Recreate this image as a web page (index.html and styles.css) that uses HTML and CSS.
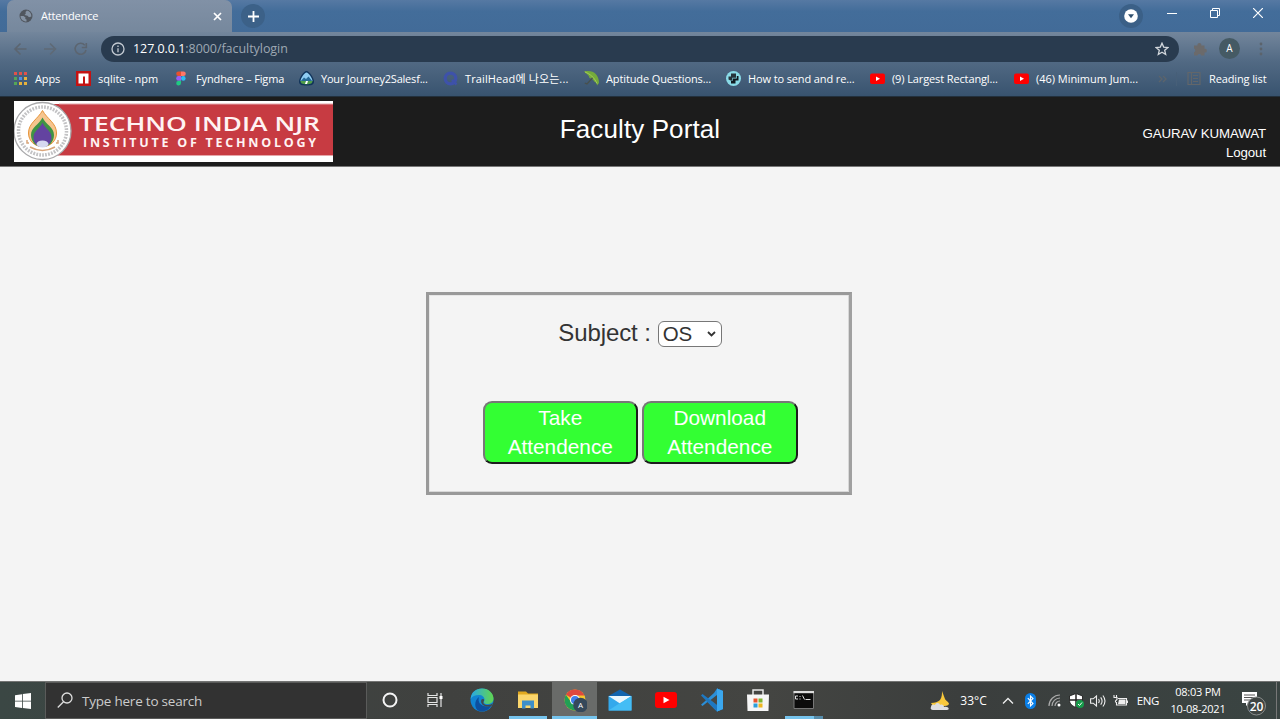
FILE: index.html
```html
<!DOCTYPE html>
<html lang="en">
<head>
<meta charset="utf-8">
<title>Attendence</title>
<link rel="stylesheet" href="styles.css">
</head>
<body>
<div class="screen">
  <div class="tabstrip">
    <div class="tab">
      <svg class="globe" width="14" height="14" viewBox="0 0 14 14"><circle cx="7" cy="7" r="6.500" fill="#50565e"/><path d="M1.500 7h3l2 1.500-.3 1.500 1.300.5v2C4 12.500 1.500 10 1.500 7zM8 1.500L6.500 3l.3 1.500L5.500 6l3 .8 1.500 1.500 2.400-.8C12.500 4 10.500 2 8 1.500z" fill="#8492a3"/></svg>
      <span class="tab-title">Attendence</span>
      <svg width="9" height="9" viewBox="0 0 9 9"><path d="M1 1l7 7M8 1L1 8" stroke="#fff" stroke-width="1.700"/></svg>
    </div>
    <div class="newtab"><svg width="11" height="11" viewBox="0 0 11 11"><path d="M5.500 0v11M0 5.500h11" stroke="#fff" stroke-width="1.800"/></svg></div>
    <div class="winctl">
      <div class="round"><svg width="14" height="14" viewBox="0 0 14 14"><circle cx="7" cy="7" r="6.800" fill="#fff"/><path d="M4 5.200h6L7 9.200z" fill="#30506f"/></svg></div>
      <svg class="min" width="10" height="10" viewBox="0 0 10 10"><path d="M0 5.500h10" stroke="#fff"/></svg>
      <svg class="max" width="10" height="10" viewBox="0 0 10 10"><path d="M.5 2.500h7v7h-7zM2.500 2.500v-2h7v7h-2" fill="none" stroke="#fff"/></svg>
      <svg class="cls" width="10" height="10" viewBox="0 0 10 10"><path d="M0 0l10 10M10 0L0 10" stroke="#fff" stroke-width="1.200"/></svg>
    </div>
  </div>
  <div class="chrome">
    <div class="toolbar">
      <svg class="nav" width="76" height="16" viewBox="0 0 76 16" fill="none" stroke-width="1.600"><path stroke="#5c6570" d="M13.500 8H2M7.500 2.500L2 8l5.500 5.500"/><path stroke="#5f6a76" d="M31 8h11.500M37 2.500L42.500 8 37 13.500"/><path stroke="#5c6570" d="M71.800 4.200A5.500 5.500 0 1 0 73 9M73.300 2v4.500h-4.500"/></svg>
      <div class="omnibox">
        <svg width="14" height="14" viewBox="0 0 14 14" fill="none" stroke="#c3cad2" stroke-width="1.300"><circle cx="7" cy="7" r="6"/><path d="M7 6.200v4M7 3.500v1.500"/></svg>
        <span class="url"><b>127.0.0.1</b>:8000/facultylogin</span>
        <svg class="star" width="14" height="14" viewBox="0 0 14 14"><path d="M7 1.200l1.700 3.900 4.200.4-3.200 2.800 1 4.200L7 10.300l-3.700 2.200 1-4.200L1.100 5.500l4.200-.4z" fill="none" stroke="#d3d8dd" stroke-width="1.300"/></svg>
      </div>
      <svg class="puzzle" width="14" height="14" viewBox="0 0 14 14"><path d="M1 3.500h3.500a2 2 0 1 1 3.800 0h3.200v3.300a1.900 1.900 0 1 1 0 3.700v3H8.200a1.900 1.900 0 0 0-3.700 0H1v-3.300a1.900 1.900 0 0 0 0-3.600z" fill="#6b6a6b"/></svg>
      <div class="avatar">A</div>
      <svg class="dots" width="4" height="14" viewBox="0 0 4 14" fill="#5b636c"><circle cx="2" cy="2" r="1.400"/><circle cx="2" cy="7" r="1.400"/><circle cx="2" cy="12" r="1.400"/></svg>
    </div>
    <div class="bookmarks">
      <div class="bm"><svg width="15" height="15" viewBox="0 0 15 15"><path d="M1 1h3v3H1zM6 1h3v3H6zM11 1h3v3h-3z" fill="#e0524a"/><path d="M1 6h3v3H1z" fill="#54a657"/><path d="M6 6h3v3H6z" fill="#4f8fe8"/><path d="M11 6h3v3h-3zM6 11h3v3H6zM11 11h3v3h-3z" fill="#e6b13c"/><path d="M1 11h3v3H1z" fill="#54a657"/></svg><span>Apps</span></div>
      <div class="bm npm"><svg width="15" height="15" viewBox="0 0 15 15"><path fill="#c41212" d="M0 0h15v15H0z"/><path fill="#fff" d="M2.500 2.500h10v10H9V5.500H7v7H2.500z"/></svg><span>sqlite - npm</span></div>
      <div class="bm"><svg width="15" height="15" viewBox="0 0 15 15"><path d="M7 .5H4.500a2.300 2.300 0 0 0 0 4.600H7z" fill="#e8502e"/><path d="M7 .5h2.500a2.300 2.300 0 0 1 0 4.600H7z" fill="#ff7667"/><path d="M7 5.100H4.500a2.300 2.300 0 0 0 0 4.600H7z" fill="#9a5cf5"/><circle cx="9.300" cy="7.400" r="2.300" fill="#2bbcf5"/><path d="M7 9.700H4.500A2.400 2.400 0 1 0 7 12z" fill="#1fc982"/></svg><span>Fyndhere – Figma</span></div>
      <div class="bm journey"><svg width="15" height="15" viewBox="0 0 15 15"><path d="M7.500 0C10.500 0 15 7 15 10.500s-2.500 4-7.500 4-7.500-.5-7.500-4S4.500 0 7.500 0z" fill="#10345b"/><path d="M7.500 1.500C9.500 1.500 13.500 7.500 13.500 10h-12C1.500 7.500 5.500 1.500 7.500 1.500z" fill="#8fcdf2"/><path d="M1.800 10L5 6.500l2 1.500L9.500 5.500 13.200 10z" fill="#276b99"/><path d="M1.500 10h12c0 2-1.500 3.300-6 3.300s-6-1.300-6-3.300z" fill="#4f9c4a"/><path d="M7 10h2l-1 3H6z" fill="#fff"/></svg><span>Your Journey2Salesf...</span></div>
      <div class="bm head"><svg width="15" height="15" viewBox="0 0 15 15"><circle cx="7.500" cy="7.500" r="5.300" fill="none" stroke="#3e52aa" stroke-width="3.200"/><path d="M9 9l4.500 4.500" stroke="#3e52aa" stroke-width="2.500"/></svg><span>TrailHead에 나오는...</span></div>
      <div class="bm"><svg width="15" height="15" viewBox="0 0 15 15"><path d="M0 .5c9-2 15 3 15 11.500L13 14.500c0-2-.8-3-2.800-4C9.500 8.500 7.500 7.500 5.500 7 5 4 2.500 3 0 .5z" fill="#74ab3b"/><path d="M1 1c5 2 9 5 12 11.500" stroke="#a5cc58" fill="none"/><path d="M8.500 7L3 13l-2.200-1" stroke="#48504c" stroke-width="1.300" fill="none"/></svg><span>Aptitude Questions...</span></div>
      <div class="bm"><svg width="15" height="15" viewBox="0 0 15 15"><circle cx="7.500" cy="7.500" r="7.500" fill="#8adbe8"/><path d="M5 2.500h5v4.300H6.200v2.700H4.500L2.500 8.500V5.500H5z" fill="#26343b"/><path d="M10.800 5h1.700v4.500H9.500v3H5V9.800h1.800V7.500h4z" fill="#101a20"/></svg><span>How to send and re...</span></div>
      <div class="bm"><svg width="15" height="15" viewBox="0 0 15 15"><rect y="2.500" width="15" height="10.500" rx="2" fill="#f00"/><path d="M6 5.500v4.500l4-2.200z" fill="#fff"/></svg><span>(9) Largest Rectangl...</span></div>
      <div class="bm jump"><svg width="15" height="15" viewBox="0 0 15 15"><rect y="2.500" width="15" height="10.500" rx="2" fill="#f00"/><path d="M6 5.500v4.500l4-2.200z" fill="#fff"/></svg><span>(46) Minimum Jum...</span></div>
      <div class="bm more"><svg width="9" height="8" viewBox="0 0 9 8"><path d="M1 1l3 3-3 3M5 1l3 3-3 3" fill="none" stroke="#5c646b" stroke-width="1.300"/></svg></div>
      <div class="bm"><svg width="15" height="15" viewBox="0 0 15 15" fill="none" stroke="#62666a" stroke-width="1.200"><path d="M1 1.500h12v12H1zM4.500 2v11M6 4.500h5M6 7.500h5M6 10.500h5"/></svg><span>Reading list</span></div>
    </div>
  </div>

  <header class="header">
    <svg class="logo" width="319" height="61" viewBox="0 0 319 61">
      <path fill="#fff" d="M0 0h319v61H0z"/>
      <path fill="#c73b42" d="M29 3h290v51.500H29z"/>
      <path stroke="#e6a6a9" d="M45 3h274M45 54.500h274"/>
      <circle cx="28.500" cy="30" r="28.500" fill="#fff" stroke="#a8a8aa" stroke-width="1.300"/>
      <circle cx="28.500" cy="30" r="24" fill="none" stroke="#c2c2c4" stroke-width="3.500" stroke-dasharray="1.800 1.200"/>
      <path d="M15 42h-2v-3M42 42h2v-3M16 46q12.500 7 25 0" fill="none" stroke="#d9a57a" stroke-width="1.500"/>
      <path d="M28.500 9.500C24 18 14.500 22 14.500 32c0 8 6 13.500 14 13.500s14-5.500 14-13.500c0-10-9.500-14-14-22.500z" fill="#f6c58f" stroke="#e79438"/>
      <path d="M28.500 16.500C25 24 17 26 17 34c0 7 5 12 11.500 12S40 41 40 34c0-8-8-10-11.500-17.500z" fill="#3f9444"/>
      <path d="M28.500 21.500C26 28 19.500 29.500 19.500 36.500c0 5.500 3.800 9.500 9 9.500s9-4 9-9.500c0-7-6.500-8.500-9-15z" fill="#6343a0"/>
      <ellipse cx="28.500" cy="43" rx="6" ry="3.500" fill="#d6d8ef"/>
      <text class="logo-a" x="65" y="29.500" textLength="241" lengthAdjust="spacingAndGlyphs">TECHNO INDIA NJR</text>
      <text class="logo-b" x="69" y="46" textLength="233" lengthAdjust="spacing">INSTITUTE OF TECHNOLOGY</text>
    </svg>
    <h1 class="title">Faculty Portal</h1>
    <div class="user"><span class="name">GAURAV KUMAWAT</span><span class="logout">Logout</span></div>
  </header>

  <main class="main">
    <div class="panel">
      <div class="subject"><span>Subject :</span>
        <div class="select"><span>OS</span><svg width="9" height="6" viewBox="0 0 9 6"><path d="M1 1l3.500 3.500L8 1" fill="none" stroke="#333" stroke-width="1.800"/></svg></div>
      </div>
      <div class="actions"><button class="btn">Take<br>Attendence</button><button class="btn">Download<br>Attendence</button></div>
    </div>
  </main>

  <footer class="taskbar">
    <div class="start"><svg width="16" height="16" viewBox="0 0 16 16" fill="#fff"><path d="M0 2.200l7-1v6.500H0zM7.800 1L16 0v7.700H7.800zM0 8.400h7v6.500l-7-1zM7.800 8.400H16V16l-8.200-1z"/></svg></div>
    <div class="search"><svg width="16" height="17" viewBox="0 0 16 17" fill="none" stroke="#dedede" stroke-width="1.300"><circle cx="10" cy="6" r="5"/><path d="M6.500 9.700L.8 15.500"/></svg><span>Type here to search</span></div>
    <div class="apps">
      <div class="app"><svg width="24" height="24" viewBox="0 0 24 24"><circle cx="12" cy="12" r="6.500" fill="none" stroke="#f4f4f4" stroke-width="2"/></svg></div>
      <div class="app"><svg width="24" height="24" viewBox="0 0 24 24" fill="none" stroke="#e5e5e5" stroke-width="1.200"><path d="M4 5v2.500h9V5M4 19v-2.500h9V19M4 9.500h9v5H4zM17 5v14"/><path d="M15.500 8h3v3h-3z" fill="#fff" stroke="none"/></svg></div>
      <div class="app"><svg width="24" height="24" viewBox="0 0 24 24">
        <defs><linearGradient id="eg" x1="0" x2="1"><stop offset="0" stop-color="#28a8e6"/><stop offset="1" stop-color="#62d64e"/></linearGradient></defs>
        <circle cx="12" cy="12" r="11.500" fill="#1184d2"/><path d="M.7 11C1 4 6 .5 12 .5c7 0 11.500 5 11.500 10 0 4-3 5.500-6 5.500-4 0-4-2-3-3.500C15 9 12 7 9 7c-4 0-7 1.500-8.300 4z" fill="url(#eg)"/><path d="M9 9c-2 6 3 11 12 9-3 5-8 6-12 5-5-2-5-11 0-14z" fill="#0d4f9e"/><path d="M14 12.500c-1.500 3 0 4.500 4 4.500 2 0 4-1 5-2l-1.500 3C15 20 9.500 16 11.500 11.500c1-1 3-.5 2.500 1z" fill="#42484a"/></svg></div>
      <div class="app run"><svg width="24" height="24" viewBox="0 0 24 24"><path d="M2 3.500h8l2 2h10V20H2z" fill="#e2a91f"/><path d="M2 6.500h20V20H2z" fill="#fbd66c"/><path d="M6 20.500v-8h12v8h-3.500v-3h-5v3z" fill="#3d8fc9"/></svg></div>
      <div class="app run active"><svg width="24" height="24" viewBox="0 0 24 24"><circle cx="12" cy="12" r="10.500" fill="#f5c52c"/><path d="M12 12L2.900 6.800A10.500 10.500 0 0 1 21.500 7.500H12z" fill="#df493d"/><path d="M2.900 6.800A10.500 10.500 0 0 0 12 22.500l4-7.500-8-1z" fill="#21a055"/><circle cx="12" cy="12" r="5" fill="#fff"/><circle cx="12" cy="12" r="4" fill="#407fea"/><circle cx="17.500" cy="17" r="7.300" fill="#35485a"/><text x="17.500" y="20" class="badge-a">A</text></svg></div>
      <div class="app"><svg width="24" height="24" viewBox="0 0 24 24"><path d="M.5 8L12 1.500 23.500 8z" fill="#1264ae"/><path d="M.5 8h23v14.500H.5z" fill="#33a9ec"/><path d="M.5 8h23L12 15.500z" fill="#eaf6fd"/><path d="M.5 22.500L12 15l11.500-7v14.500z" fill="#44bdf5"/></svg></div>
      <div class="app"><svg width="24" height="24" viewBox="0 0 24 24"><rect x="1" y="4" width="22" height="16" rx="3" fill="#f00"/><path d="M9.500 8.800v6.500l6-3.200z" fill="#fff"/></svg></div>
      <div class="app"><svg width="24" height="24" viewBox="0 0 24 24"><path d="M17 .5l6 2.500v18l-6 2.500L7.500 14 2.500 18 1 16.800 14 5z" fill="#2b8fd8"/><path d="M1 7.500L2.500 6 17 17V.5l6 2.500v18l-6 2.500z" fill="#1e78c2"/><path d="M17 .5l6 2.500v18l-6 2.500z" fill="#3ba7ee"/><path d="M17 7v10l-6.500-5z" fill="#454744"/></svg></div>
      <div class="app"><svg width="24" height="24" viewBox="0 0 24 24"><path d="M7 7V2h10v5" fill="none" stroke="#e8e8e8" stroke-width="1.500"/><path d="M1 6.500h22L22.500 23h-21z" fill="#f6f6f6"/><path d="M7.500 10.500h4v4h-4z" fill="#e8532c"/><path d="M12.500 10.500h4v4h-4z" fill="#7fb52f"/><path d="M7.500 15.500h4v4h-4z" fill="#2b9fda"/><path d="M12.500 15.500h4v4h-4z" fill="#efb71f"/></svg></div>
      <div class="app run cmd"><svg width="24" height="24" viewBox="0 0 24 24"><path d="M2 3.500h19.500v17H2z" fill="#0c0c0c" stroke="#777"/><path d="M1.500 3h20.500v2.200H1.500z" fill="#ddd"/><path d="M6 8H3.500v3H6M8 8v1M8 10.500v1M10.500 7.500l2 4M13.500 11.500h5" stroke="#ddd" fill="none"/></svg></div>
    </div>
    <div class="tray">
      <svg class="moon" width="21" height="21" viewBox="0 0 21 21"><path d="M12 1c1 3 2 5 3 8 1 2 4 3 4 5-1 2-4 2-6 2H3l-2-3c4 0 7-1 9-3 2-3 2-6 2-9z" fill="#f8c83c"/><path d="M1 17c0-3 3-3 4-2 1-3 5-2 5 0 2-1 4 0 4 2 5-1 6 3 3 3H3c-2 0-3-2-2-3z" fill="#dedfe1"/></svg>
      <span class="temp">33°C</span>
      <svg class="chev" width="12" height="8" viewBox="0 0 12 8"><path d="M1 6.500L6 1.500l5 5" fill="none" stroke="#eee" stroke-width="1.300"/></svg>
      <svg class="bt" width="11" height="16" viewBox="0 0 11 16"><rect width="11" height="16" rx="5.500" fill="#0a7fe8"/><path d="M2.800 5.200l5.200 5.300L5.500 13V3L8 5.500l-5.200 5.300" fill="none" stroke="#fff" stroke-width="1.100"/></svg>
      <svg class="wifi" width="13" height="13" viewBox="0 0 13 13" fill="none" stroke="#aaa" stroke-width="1.200"><path d="M1 12A11 11 0 0 1 12 1M4 12a8 8 0 0 1 8-8M7 12a5 5 0 0 1 5-5"/><circle cx="11" cy="11" r="1.500" fill="#fff" stroke="none"/></svg>
      <svg class="shield" width="15" height="15" viewBox="0 0 15 15"><path d="M7 .5L13.500 3v4c0 4-3 6-6.500 7.500C3.500 13 .5 11 .5 7V3z" fill="#fff" stroke="#111" stroke-width=".8"/><path d="M7 1v13M1 7h12.500" stroke="#222" stroke-width="1.500"/><circle cx="11" cy="11" r="4" fill="#169b4a"/><path d="M9 11l1.500 1.500L13 9.500" stroke="#fff" fill="none"/></svg>
      <svg class="vol" width="16" height="14" viewBox="0 0 16 14" fill="none" stroke="#eee" stroke-width="1.100"><path d="M.6 4.800h2.600L6.500 2v10L3.200 9.200H.6zM8.500 5q1.500 2 0 4M10.700 3.300q2.800 3.700 0 7.400M12.900 1.500q4.200 5.500 0 11"/></svg>
      <svg class="bat" width="15" height="12" viewBox="0 0 15 12" fill="none" stroke="#eee" stroke-width="1.100"><path d="M5 3.500h8.500v6.500H3.500V7M14.500 5.500v2.500M1 0v2.500M3.500 0v2.500M.5 2.500h3.500v2L2.500 6v1.500"/><path d="M6 4.500h6.500v4.500H5z" fill="#eee" stroke="none"/></svg>
      <span class="lang">ENG</span>
      <div class="clock"><span class="time">08:03 PM</span><span class="date">10-08-2021</span></div>
      <div class="notif"><svg width="26" height="25" viewBox="0 0 26 25"><path d="M1 1h15v11H8l-3 3v-3H1z" fill="#fff"/><path d="M3 4h11M3 6.500h11M3 9h7" stroke="#555"/><circle cx="15.500" cy="15" r="9" fill="#3f4543" stroke="#8a8e8d"/><text x="15.500" y="19.500" class="count">20</text></svg></div>
      <i class="peek"></i>
    </div>
  </footer>
</div>
</body>
</html>
```
FILE: styles.css
```css
* { box-sizing: border-box; }
body { margin: 0; }
svg { display: block; flex: none; }
span { white-space: nowrap; }
.screen { width: 1280px; height: 719px; display: flex; flex-direction: column; overflow: hidden; background: #f4f4f4; font-family: "Open Sans", "Noto Sans CJK KR", sans-serif; color: #fff; }

.tabstrip { height: 32px; flex: none; display: flex; padding-left: 7px; background: linear-gradient(#5679a3, #436d9a 35%, #426b98); }
.tab { width: 225px; height: 32px; padding: 0 10px 0 12px; display: flex; align-items: center; border-radius: 7px 7px 0 0; background: linear-gradient(#8191a6, #76889d); }
.tab-title { flex: 1; margin: -2px 0 0 8px; font-size: 11px; letter-spacing: -.15px; }
.newtab { width: 24px; height: 24px; margin: 4px 0 0 9px; display: flex; align-items: center; justify-content: center; border-radius: 50%; background: #3c6188; }
.winctl { margin-left: auto; display: flex; }
.round { width: 24px; height: 24px; margin-top: 4px; display: flex; align-items: center; justify-content: center; border-radius: 50%; background: #3b6087; }
.min { margin: 8px 0 0 24px; }
.max { margin: 8px 0 0 33px; }
.cls { margin: 8px 17px 0 33px; }

.chrome { height: 65px; flex: none; background: linear-gradient(#73869c, #526a84 45%, #38536f); border-bottom: 1px solid #22303d; }
.toolbar { height: 33px; display: flex; align-items: center; padding-left: 13px; }
.omnibox { width: 1078px; height: 26px; margin-left: 12px; padding: 0 10px; display: flex; align-items: center; border-radius: 13px; background: #293b4f; }
.url { margin-left: 8px; font-size: 12.500px; letter-spacing: -.05px; color: #9ea8b3; }
.url b { font-weight: 400; color: #fff; }
.star { margin-left: auto; }
.puzzle { margin-left: 14px; }
.avatar { width: 21px; height: 21px; margin-left: 12px; border-radius: 50%; background: #455a64; font-size: 10px; line-height: 21px; text-align: center; }
.dots { margin-left: 19px; }
.bookmarks { height: 27px; padding-left: 13px; display: grid; grid-template-columns: 63px 98px 125px 144px 141px 142px 144px 144px 144px 29px 93px; align-items: center; }
.bm { display: flex; align-items: center; gap: 7px; font-size: 11px; letter-spacing: -.12px; line-height: 15px; }
.bm span { margin-top: -1px; }
.npm { letter-spacing: -.03px; }
.journey { letter-spacing: -.2px; }
.head { letter-spacing: .12px; }
.jump { letter-spacing: -.03px; }
.more { height: 14px; border-right: 1px solid #475f78; margin-right: 10px; }

.header { height: 70px; flex: none; padding: 4px 14px 0; display: grid; grid-template-columns: 1fr auto 1fr; background: #1c1c1c; border-bottom: 1px solid #777; font-family: "Liberation Sans", Arial, sans-serif; }
.logo-a { font: 600 20.500px "Open Sans", sans-serif; fill: #fff3f3; }
.logo-b { font: 700 12.500px "Open Sans", sans-serif; fill: #fff3f3; }
.title { margin: 12px 0 0; font-size: 26px; font-weight: 400; line-height: 32px; letter-spacing: .1px; }
.user { padding-top: 23px; display: flex; flex-direction: column; align-items: flex-end; font-size: 13.300px; line-height: 19px; }
.name, .logout { letter-spacing: -.1px; }

.main { flex: 1; padding-top: 125px; display: flex; justify-content: center; align-items: flex-start; background: #f4f4f4; font-family: "Liberation Sans", Arial, sans-serif; }
.panel { width: 426px; height: 203px; border: 3px solid #999; border-right-color: #a0a0a0; padding-top: 24px; margin-right: 2px; box-shadow: inset -1px -1px #d8d8d8, inset 1px 1px #e6e6e6; }
.subject { height: 28px; display: flex; justify-content: center; align-items: center; gap: 7px; padding-left: 2px; color: #333; font-size: 24px; letter-spacing: -.1px; }
.select { width: 64px; height: 26px; margin-top: 1px; padding: 0 5px 0 4px; display: flex; align-items: center; justify-content: space-between; border: 1px solid #777; border-radius: 6px; background: #fff; font-size: 20.500px; }
.actions { margin-top: 54px; display: flex; justify-content: center; gap: 4px; padding-left: 2px; }
.btn { width: 155.500px; height: 63px; padding: 0 0 1px; border: 2px solid; border-color: #777 #1c1c1c #1c1c1c #777; border-radius: 9px; background: #33ff33; color: #fff; font: 20.800px/29px "Liberation Sans", Arial, sans-serif; }

.taskbar { height: 38px; flex: none; display: flex; border-top: 1px solid #737473; background: linear-gradient(90deg, #3b4744, #40413f 35%, #444542 60%, #3b3e3d 75%, #3a4442); }
.start { width: 45px; display: flex; align-items: center; justify-content: center; }
.search { width: 322px; padding-left: 11px; display: flex; align-items: center; gap: 9px; background: #323232; border: 1px solid #5a5b5a; font-size: 13.500px; letter-spacing: -.22px; color: #ccc; }
.apps { display: flex; }
.app { width: 46px; padding-top: 6px; display: flex; justify-content: center; align-items: flex-start; }
.run { width: 38px; margin: 0 4px; border-bottom: 3px solid #76c4ed; }
.active { width: 45px; margin: 0 0 0 1px; background: #696b69; }
.cmd { border-image: linear-gradient(90deg, #76c4ed 76%, #568caa 76%) 1; border-width: 0 0 3px; border-style: solid; }
.badge-a { font: 8px "Open Sans", sans-serif; fill: #fff; text-anchor: middle; }
.tray { margin-left: auto; display: flex; align-items: center; font-size: 12px; }
.temp { margin-left: 9px; }
.chev { margin-left: 15px; }
.bt { margin-left: 11px; }
.wifi { margin-left: 12px; }
.shield { margin-left: 8px; }
.vol { margin-left: 6px; }
.bat { margin-left: 7px; }
.lang { margin-left: 9px; font-size: 11.500px; letter-spacing: -.4px; }
.clock { width: 54px; margin-left: 12px; display: flex; flex-direction: column; align-items: center; font-size: 11px; line-height: 17px; letter-spacing: -.25px; position: relative; top: -1px; }
.notif { margin-left: 16px; padding-top: 6px; }
.count { font: 600 12px "Open Sans", sans-serif; fill: #fff; text-anchor: middle; }
.peek { width: 4px; height: 37px; margin-left: 9px; border-left: 1px solid #777; }
```
